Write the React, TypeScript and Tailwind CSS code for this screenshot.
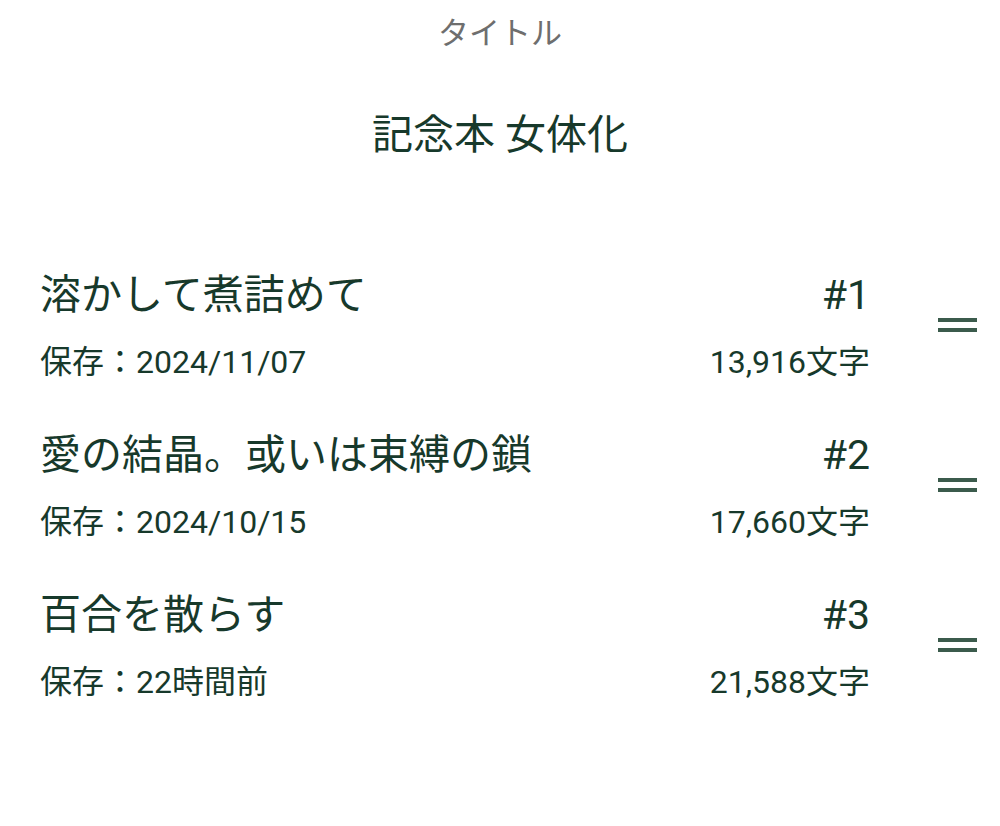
const episodes = [
  { no: 1, title: '溶かして煮詰めて', saved: '2024/11/07', chars: '13,916' },
  { no: 2, title: '愛の結晶。或いは束縛の鎖', saved: '2024/10/15', chars: '17,660' },
  { no: 3, title: '百合を散らす', saved: '22時間前', chars: '21,588' },
]

function DragHandle() {
  return (
    <div className="flex w-[39px] flex-col gap-[6px]" aria-label="並べ替え">
      <span className="block h-[4px] w-full bg-[#3b5b4c]" />
      <span className="block h-[4px] w-full bg-[#3b5b4c]" />
    </div>
  )
}

export default function App() {
  return (
    <div
      className="min-h-[826px] w-[1000px] bg-white text-[#17392b]"
      style={{ fontFamily: 'Roboto, "Noto Sans CJK JP", sans-serif' }}
    >
      <header className="flex flex-col items-center pt-[14px]">
        <p className="text-[31px] leading-[40px] text-[#6e6e6e]">タイトル</p>
        <h1 className="mt-[55px] text-[41px] leading-[52px] font-normal">記念本 女体化</h1>
      </header>

      <ul className="mt-[84px]">
        {episodes.map((ep) => (
          <li key={ep.no} className="flex h-[160px] items-center pl-[40px] pr-[23px]">
            <div className="flex-1">
              <div className="flex items-baseline justify-between">
                <span className="text-[41px] leading-[52px]">{ep.title}</span>
                <span className="text-[41px] leading-[52px]">#{ep.no}</span>
              </div>
              <div className="mt-[21px] flex items-baseline justify-between text-[32px] leading-[40px]">
                <span>保存：{ep.saved}</span>
                <span>{ep.chars}文字</span>
              </div>
            </div>
            <div className="ml-[68px]">
              <DragHandle />
            </div>
          </li>
        ))}
      </ul>
    </div>
  )
}
